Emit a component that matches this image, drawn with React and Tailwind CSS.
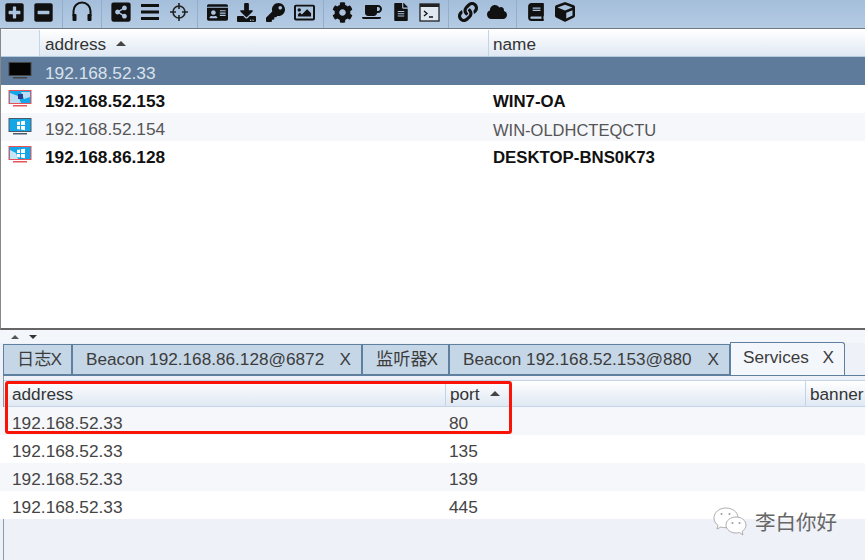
import {
  FaPlusSquare, FaMinusSquare, FaShareAltSquare, FaIdCard, FaDownload, FaKey,
  FaRegImage, FaCog, FaCoffee, FaFileAlt, FaLink, FaCloud, FaBook, FaCube,
} from "react-icons/fa";

const font = "font-['Liberation_Sans','Noto_Sans_CJK_SC',sans-serif]";

function Sep() {
  return <div className="w-px h-[28px] mx-[4.25px] bg-[#c3d5e8] border-l border-[#94aec9]" />;
}

function Slot({ children }) {
  return <div className="w-[29px] h-[28px] pb-[4px] flex items-center justify-center">{children}</div>;
}

function Bars() {
  return (
    <svg width="20" height="18" viewBox="0 0 20 18" fill="#111">
      <rect x="1" y="1" width="18" height="3" />
      <rect x="1" y="7.5" width="18" height="3" />
      <rect x="1" y="14" width="18" height="3" />
    </svg>
  );
}

function Crosshair() {
  return (
    <svg width="20" height="20" viewBox="0 0 20 20" fill="none" stroke="#222" strokeWidth="1.6">
      <circle cx="10" cy="10" r="6" />
      <path d="M10 1v6M10 13v6M1 10h6M13 10h6" />
    </svg>
  );
}

function Headset() {
  return (
    <svg width="22" height="22" viewBox="0 0 22 22">
      <path d="M2.500 15V10a8.500 8.500 0 0 1 17 0v5" fill="none" stroke="#111" strokeWidth="2" />
      <rect x="1.500" y="13" width="4" height="7" rx="1" fill="#111" />
      <rect x="16.500" y="13" width="4" height="7" rx="1" fill="#111" />
    </svg>
  );
}

function Term() {
  return (
    <svg width="21" height="19" viewBox="0 0 21 19">
      <rect x="1" y="1" width="19" height="17" fill="#dfe8f1" stroke="#222" strokeWidth="1.300" />
      <rect x="1" y="1" width="19" height="3" fill="#222" />
      <path d="M5 8l3 2.500-3 2.500M10 14h4" fill="none" stroke="#111" strokeWidth="1.300" />
    </svg>
  );
}

function Monitor({ kind }) {
  const screen = kind === "black" ? "#050505" : "#14a7e8";
  const frame = kind === "black" ? "#444" : kind === "win" ? "#4d5a66" : "#e8535a";
  return (
    <svg width="24" height="20" viewBox="0 0 24 20">
      <rect x="1" y="1.500" width="22" height="13" fill={screen} stroke={frame} />
      {kind === "hit7" && <path d="M2 4l8 3 3 7H2zM13 3h9v5l-6 2z" fill="#b9dcf2" />}
      {kind === "hit7" && <rect x="10" y="5" width="5" height="5" fill="#27408f" />}
      {(kind === "win" || kind === "hit10") && <path d="M9 5l3-.5V8H9zM13 4.300l4-.6V8h-4zM9 9h3v3.400l-3-.5zM13 9h4v4.200l-4-.6z" fill="#fff" />}
      {kind === "hit10" && <path d="M2 5l6 3 2 6H2z" fill="#c5e6f7" />}
      <path d="M5 16h14v1.500H5z" fill={frame} />
    </svg>
  );
}

function Sort() {
  return <span className="ml-[10px] mb-[3px] w-0 h-0 border-x-[5.5px] border-x-transparent border-b-[5px] border-b-[#444]" />;
}

function HeadCell({ className, children }) {
  return (
    <div className={`h-full flex items-center border-r border-[#c3d4e6] bg-gradient-to-b from-white to-[#dfe8f3] text-[17.2px] text-[#333] ${className}`}>
      {children}
    </div>
  );
}

function HostRow({ kind, address, name, bold, bg, text }) {
  return (
    <div className={`h-[28px] flex items-center text-[17.3px] ${bg} ${text} ${bold ? "font-bold" : ""}`}>
      <div className="w-[40px] pl-[7px] flex items-center"><Monitor kind={kind} /></div>
      <div className="w-[448px] pl-[4px] pt-[6px]">{address}</div>
      <div className={`pl-[4px] pt-[6px] ${bold ? "text-[16.8px]" : "text-[16.5px]"}`}>{name}</div>
    </div>
  );
}

function Tab({ w, label, x, active }) {
  return (
    <div className={`${w} shrink-0 flex items-center justify-between text-[17.2px] text-[#3c3c3c] border border-[#5f7f9f] ${active ? "h-[33px] bg-[#f3f6fb] border-b-0 rounded-tr-[3px] pl-[12px] pr-[10px] pb-[3px]" : "h-[31px] bg-[#c5d6e7] pl-[13px] pr-[10px]"}`}>
      <span className="whitespace-nowrap">{label}</span>
      <span className={x}>X</span>
    </div>
  );
}

function PortRow({ port, bg }) {
  return (
    <div className={`h-[28px] flex items-center pt-[6px] text-[17.3px] text-[#444] ${bg}`}>
      <div className="w-[449px] pl-[12px]">192.168.52.33</div>
      <div>{port}</div>
    </div>
  );
}

const hosts = [
  { kind: "black", address: "192.168.52.33", name: "", bg: "bg-[#5e7b9b]", text: "text-[#d9e2ec]" },
  { kind: "hit7", address: "192.168.52.153", name: "WIN7-OA", bold: true, bg: "bg-white", text: "text-[#111]" },
  { kind: "win", address: "192.168.52.154", name: "WIN-OLDHCTEQCTU", bg: "bg-[#f6f7fb]", text: "text-[#555]" },
  { kind: "hit10", address: "192.168.86.128", name: "DESKTOP-BNS0K73", bold: true, bg: "bg-white", text: "text-[#111]" },
];

export default function App() {
  return (
    <div className={`w-[865px] h-[560px] overflow-hidden relative flex flex-col bg-white ${font}`}>
      <div className="h-[28px] shrink-0 flex items-center bg-gradient-to-b from-[#a4bedb] to-[#b4cbe3] text-[#111] border-b border-[#6f7a85] box-content">
        <Slot><FaPlusSquare size={21} /></Slot>
        <Slot><FaMinusSquare size={21} /></Slot>
        <Sep />
        <Slot><Headset /></Slot>
        <Sep />
        <Slot><FaShareAltSquare size={22} /></Slot>
        <Slot><Bars /></Slot>
        <Slot><Crosshair /></Slot>
        <Sep />
        <Slot><FaIdCard size={21} /></Slot>
        <Slot><FaDownload size={19} /></Slot>
        <Slot><FaKey size={19} /></Slot>
        <Slot><FaRegImage size={21} /></Slot>
        <Sep />
        <Slot><FaCog size={21} /></Slot>
        <Slot><FaCoffee size={20} /></Slot>
        <Slot><FaFileAlt size={18} /></Slot>
        <Slot><Term /></Slot>
        <Sep />
        <Slot><FaLink size={20} /></Slot>
        <Slot><FaCloud size={20} /></Slot>
        <Sep />
        <Slot><FaBook size={18} /></Slot>
        <Slot><FaCube size={20} /></Slot>
      </div>

      <div className="h-[301px] shrink-0 bg-white border-b-2 border-[#666] border-l border-l-[#888]">
        <div className="h-[27px] mt-[1px] flex border-b border-[#b5cbe0]">
          <HeadCell className="w-[39px] !bg-none !bg-[#eef3f9]" />
          <HeadCell className="w-[449px] pl-[5px] pt-[4px]">address<Sort /></HeadCell>
          <HeadCell className="flex-1 pl-[4px] pt-[4px] !border-r-0">name</HeadCell>
        </div>
        {hosts.map((h) => <HostRow key={h.address} {...h} />)}
      </div>

      <div className="h-[13px] shrink-0 flex items-center gap-[10px] pl-[11px] bg-[#f3f6fb]">
        <span className="w-0 h-0 border-x-[4px] border-x-transparent border-b-[4px] border-b-[#555]" />
        <span className="w-0 h-0 border-x-[4px] border-x-transparent border-t-[4px] border-t-[#333]" />
      </div>

      <div className="flex-1 flex flex-col bg-[#eef1f8] pl-[3px]">
        <div className="h-[33px] shrink-0 flex items-end border-b border-[#5f7f9f]">
          <Tab w="w-[69px]" label="日志" x="-ml-[1px]" />
          <Tab w="w-[290px]" label="Beacon 192.168.86.128@6872" x="" />
          <Tab w="w-[87px]" label="监听器" x="-ml-[1px]" />
          <Tab w="w-[281px]" label="Beacon 192.168.52.153@880" x="" />
          <Tab w="w-[115px]" label="Services" x="" active />
        </div>
        <div className="flex-1 border-l border-[#8b9bab] bg-[#eef1f8] pt-[4px]">
          <div className="h-[27px] flex border-y border-y-[#c3d4e6]">
            <HeadCell className="w-[442px] pl-[8px] pt-[2px]">address</HeadCell>
            <HeadCell className="w-[360px] pl-[4px] pt-[2px]">port<Sort /></HeadCell>
            <HeadCell className="flex-1 pl-[4px] pt-[2px] !border-r-0 whitespace-nowrap">banner</HeadCell>
          </div>
          <div className="-ml-[4px]">
            <PortRow port="80" bg="bg-[#f6f7fb]" />
            <PortRow port="135" bg="bg-white" />
            <PortRow port="139" bg="bg-[#f6f7fb]" />
            <PortRow port="445" bg="bg-white" />
          </div>
        </div>
      </div>

      <div className="absolute left-[5px] top-[381px] w-[507px] h-[53px] border-[3px] border-[#fa1408] rounded-[3px]" />

      <div className="absolute left-[712px] top-[506px] flex items-center gap-[7px]">
        <svg width="36" height="30" viewBox="0 0 36 30" fill="#fff" stroke="#a5a5a5" strokeWidth="0.9">
          <path d="M14 2C7 2 2 6.500 2 12c0 3 1.500 5.500 4 7.300L5 23l4-2c1.500.5 3 .7 5 .7 6 0 12-4 12-10S20 2 14 2z" />
          <path d="M24 11c-5.500 0-10 3.600-10 8s4.500 8 10 8c1.200 0 2.300-.2 3.300-.5L31 29l-1-3.500c2.500-1.500 4-3.900 4-6.500 0-4.400-4.500-8-10-8z" />
          <circle cx="9.500" cy="8" r="1" fill="#999" stroke="none" />
          <circle cx="17.500" cy="8" r="1" fill="#999" stroke="none" />
          <circle cx="20.500" cy="17" r="1" fill="#999" stroke="none" />
          <circle cx="27.500" cy="17" r="1" fill="#999" stroke="none" />
        </svg>
        <span className="text-[20.5px] text-[#666] font-['Noto_Sans_CJK_SC',sans-serif]">李白你好</span>
      </div>
    </div>
  );
}
